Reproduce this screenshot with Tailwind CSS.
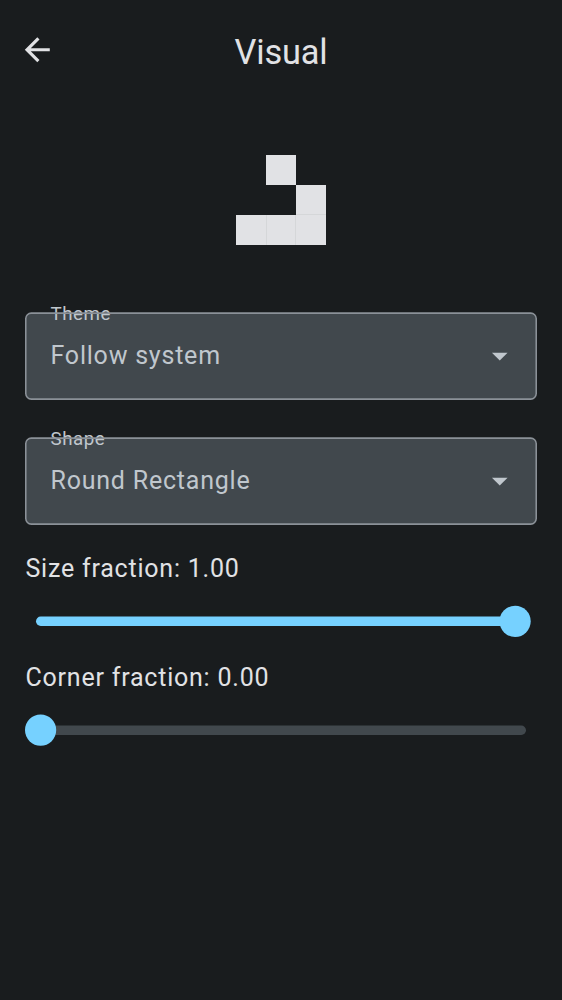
<!DOCTYPE html>
<html lang="en">
<head>
<meta charset="utf-8">
<title>Visual</title>
<script src="https://cdn.jsdelivr.net/npm/@tailwindcss/browser@4"></script>
</head>
<body class="h-[1000px] overflow-hidden bg-[#191c1e] font-[Roboto,sans-serif] text-[#e1e2e5]">
<header class="grid h-[100px] grid-cols-[100px_1fr_100px] items-center">
  <button aria-label="Back" class="ml-[18.5px] w-[37.5px]">
    <svg class="size-[37.5px]" viewBox="0 0 24 24" fill="currentColor"><path d="M19.7 11H7.53l5.59-5.59L11.7 4l-8 8 8 8 1.41-1.41L7.53 13H19.7z"/></svg>
  </button>
  <h1 class="pt-[3px] text-center text-[34.375px] leading-[44px] tracking-[-0.15px]">Visual</h1>
</header>
<main class="flex flex-col px-[25px] pt-[55px]">
  <svg class="size-[90px] self-center" viewBox="0 0 90 90" fill="#e1e2e5">
    <path d="M30 0h30v30H30zM60 30h30v60H0V60h60z"/>
    <path d="M30.5 60v30M59.5 60v30M60 59.5h30" stroke="#d5d7d9" fill="none"/>
  </svg>
  <div class="relative mt-[67px] flex h-[88px] items-center justify-between pr-[19px] pb-px pl-[25.5px] text-[#c0c7cd]">
    <svg class="absolute inset-0 h-[88px] w-[512px]" viewBox="0 0 512 88"><rect x=".78" y="1.1" width="510.44" height="86" rx="5.5" fill="#41484d"/></svg>
    <span class="absolute top-[-10px] left-[25.5px] text-[18.75px] leading-[25px] tracking-[0.5px]">Theme</span>
    <svg class="absolute inset-0 h-[88px] w-[512px]" viewBox="0 0 512 88"><rect x=".78" y="1.1" width="510.44" height="86" rx="5.5" fill="none" stroke="#8b9198" stroke-width="1.56"/></svg>
    <span class="relative text-[25px] leading-[37.5px] tracking-[0.78px]">Follow system</span>
    <svg class="relative size-[37.5px]" viewBox="0 0 24 24" fill="currentColor"><path d="M7 10l5 5 5-5z"/></svg>
  </div>
  <div class="relative mt-[37px] flex h-[88px] items-center justify-between pr-[19px] pb-px pl-[25.5px] text-[#c0c7cd]">
    <svg class="absolute inset-0 h-[88px] w-[512px]" viewBox="0 0 512 88"><rect x=".78" y="1.1" width="510.44" height="86" rx="5.5" fill="#41484d"/></svg>
    <span class="absolute top-[-10px] left-[25.5px] text-[18.75px] leading-[25px] tracking-[0.5px]">Shape</span>
    <svg class="absolute inset-0 h-[88px] w-[512px]" viewBox="0 0 512 88"><rect x=".78" y="1.1" width="510.44" height="86" rx="5.5" fill="none" stroke="#8b9198" stroke-width="1.56"/></svg>
    <span class="relative text-[25px] leading-[37.5px] tracking-[0.78px]">Round Rectangle</span>
    <svg class="relative size-[37.5px]" viewBox="0 0 24 24" fill="currentColor"><path d="M7 10l5 5 5-5z"/></svg>
  </div>
  <p class="mt-[25px] pl-[0.5px] text-[25px] leading-[37.5px] tracking-[0.78px]">Size fraction: 1.00</p>
  <svg class="mt-[17.5px] h-[32px] w-[512px] overflow-visible" viewBox="0 0 512 32">
    <path d="M15.7 16.3H490" stroke="#76d1ff" stroke-width="9.4" stroke-linecap="round"/>
    <circle cx="490.1" cy="16.35" r="15.6" fill="#76d1ff"/>
  </svg>
  <p class="mt-[22px] pl-[0.5px] text-[25px] leading-[37.5px] tracking-[0.78px]">Corner fraction: 0.00</p>
  <svg class="mt-[17.5px] h-[32px] w-[512px] overflow-visible" viewBox="0 0 512 32">
    <path d="M15.6 16.2H496.3" stroke="#41484d" stroke-width="9.4" stroke-linecap="round"/>
    <circle cx="15.6" cy="16.1" r="15.6" fill="#76d1ff"/>
  </svg>
</main>
</body>
</html>
